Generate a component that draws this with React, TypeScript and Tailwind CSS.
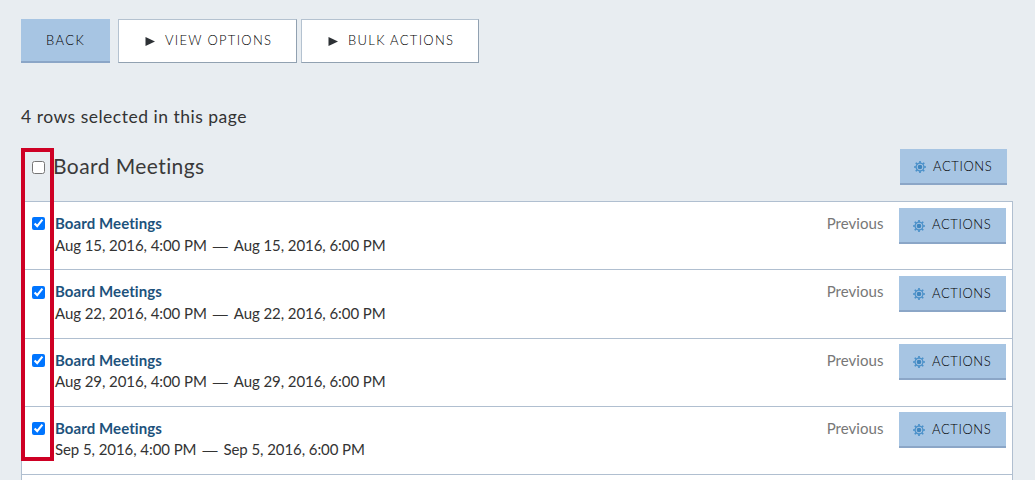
import React from "react";

function Gear() {
  return (
    <svg width="12" height="12" viewBox="0 0 12 12" fill="none" stroke="#4a90c9" className="mt-px shrink-0">
      <circle cx="6" cy="6" r="3.9" strokeWidth="1.3" />
      <path
        d="M6 0V2M6 10V12M0 6H2M10 6H12M1.75 1.75L3.2 3.2M8.8 8.8L10.25 10.25M10.25 1.75L8.8 3.2M3.2 8.8L1.75 10.25"
        strokeWidth="1.7"
      />
      <circle cx="6" cy="6" r="2.3" fill="#3f86bf" stroke="none" />
    </svg>
  );
}

function ActionsButton() {
  return (
    <button className="flex h-9 w-[107px] shrink-0 items-center border-b-2 border-[#8ba6c7] bg-[#a7c5e3] pt-px pl-[14px] text-[13px] font-light text-black">
      <Gear />
      <span className="ml-[7px] tracking-[0.6px]">ACTIONS</span>
    </button>
  );
}

function MenuButton({ label, width }: { label: string; width: string }) {
  return (
    <button className={`flex h-11 items-center border border-t-[#b4c2d0] border-r-[#91a1b1] border-b-[#91a1b1] border-l-[#b4c2d0] bg-white pl-[26px] text-[13px] font-light text-black ${width}`}>
      <svg width="10" height="9" viewBox="0 0 10 9" className="mt-px">
        <path d="M0.5 0L10 4.5L0.5 9Z" fill="#2d3135" />
      </svg>
      <span className="ml-[10px] tracking-[1.3px]">{label}</span>
    </button>
  );
}

const meetings = [
  { day: "Aug 15, 2016" },
  { day: "Aug 22, 2016" },
  { day: "Aug 29, 2016" },
  { day: "Sep 5, 2016" },
];

export default function App() {
  return (
    <div className="relative h-[480px] w-[1035px] overflow-hidden bg-[#e8edf1] pt-[19px] pl-[21px] font-['Lato',sans-serif] text-[#333] [font-variant-ligatures:none]">
      <div className="flex">
        <button className="mr-2 h-11 w-[89px] border-b-2 border-[#8ba6c7] bg-[#a7c5e3] pt-0.5 text-[13px] font-light tracking-[1.4px] text-black">BACK</button>
        <MenuButton label="VIEW OPTIONS" width="w-[179px] mr-1" />
        <MenuButton label="BULK ACTIONS" width="w-[178px]" />
      </div>
      <p className="mt-[42px] h-6 text-[17.5px] leading-6 tracking-[0.5px]">4 rows selected in this page</p>
      <div className="mt-5 flex h-[52.2px] w-[986px] items-start">
        <input type="checkbox" className="mt-3 ml-[11px] size-[13px]" />
        <h2 className="ml-[8px] h-9 flex-1 text-[21px] leading-[33px] tracking-[0.42px] text-[#3a3a3a]">Board Meetings</h2>
        <ActionsButton />
      </div>
      <div className="w-[992px] border-x border-b border-[#b0bfd0] bg-white">
        {meetings.map((m, i) => (
          <div key={i} className="flex h-[68.25px] items-start border-t border-[#b0bfd0] pr-[6px]">
            <input type="checkbox" defaultChecked className="mt-[15.2px] ml-[10px] size-[13px] accent-[#0075ff]" />
            <div className="ml-[10px] flex-1 pt-[11px] text-[15px] leading-[21.5px]">
              <div className="font-bold tracking-[0.08px] text-[#1d527c]">Board Meetings</div>
              <div className="flex tracking-[-0.07px]">
                <span>{m.day}, 4:00 PM</span>
                <span className="mx-[6px] font-['Liberation_Sans',sans-serif]">—</span>
                <span>{m.day}, 6:00 PM</span>
              </div>
            </div>
            <span className="mt-[11px] mr-[15.5px] text-[15px] leading-[21.5px] tracking-[0.05px] text-[#777]">Previous</span>
            <div className="mt-[5.5px]">
              <ActionsButton />
            </div>
          </div>
        ))}
        <div className="h-5 border-t border-[#b0bfd0]" />
      </div>
      <div className="pointer-events-none absolute top-[148px] left-[21px] h-[313px] w-[33px] border-4 border-[#ce0024]" />
    </div>
  );
}
